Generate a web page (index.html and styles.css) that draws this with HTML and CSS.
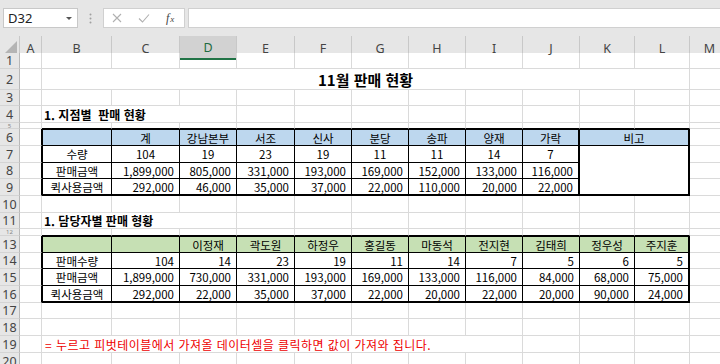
FILE: index.html
```html
<!DOCTYPE html>
<html lang="ko">
<head>
<meta charset="utf-8">
<title>11월 판매 현황</title>
<link rel="stylesheet" href="styles.css">
</head>
<body>
<div class="topbar">
  <div class="namebox"><span>D32</span><span class="caret"></span></div>
  <div class="dots"><svg width="3" height="11" viewBox="0 0 3 11"><circle cx="1.5" cy="1.5" r="1" fill="#a0a0a0"/><circle cx="1.5" cy="5.5" r="1" fill="#a0a0a0"/><circle cx="1.5" cy="9.5" r="1" fill="#a0a0a0"/></svg></div>
  <div class="fbtns">
    <svg width="10" height="10" viewBox="0 0 10 10"><path d="M1 1L9 9M9 1L1 9" stroke="#b0b0b0" stroke-width="1.1" fill="none"/></svg>
    <svg width="12" height="10" viewBox="0 0 12 10"><path d="M1 5.5L4.5 9L11 1.5" stroke="#b0b0b0" stroke-width="1.1" fill="none"/></svg>
    <span class="fx"><i>f</i><span class="x">x</span></span>
  </div>
  <div class="finput"></div>
</div>
<div class="sheet">
  <div class="r hdr">
    <div class="corner"><svg width="20" height="17" viewBox="0 0 20 17"><polygon points="17,3 17,15 5,15" fill="#b4b4b4"/></svg></div>
    <div class="ch">A</div><div class="ch">B</div><div class="ch">C</div><div class="ch sel">D</div><div class="ch">E</div><div class="ch">F</div><div class="ch">G</div><div class="ch">H</div><div class="ch">I</div><div class="ch">J</div><div class="ch">K</div><div class="ch">L</div><div class="ch">M</div>
  </div>
  <div class="r h16"><div class="rh">1</div><div class="c"></div><div class="c"></div><div class="c"></div><div class="c"></div><div class="c"></div><div class="c"></div><div class="c"></div><div class="c"></div><div class="c"></div><div class="c"></div><div class="c"></div><div class="c"></div><div class="c"></div></div>
  <div class="r h21"><div class="rh">2</div><div class="c"></div><div class="c s11 title">11월 판매 현황</div><div class="c"></div></div>
  <div class="r h16"><div class="rh">3</div><div class="c"></div><div class="c"></div><div class="c"></div><div class="c"></div><div class="c"></div><div class="c"></div><div class="c"></div><div class="c"></div><div class="c"></div><div class="c"></div><div class="c"></div><div class="c"></div><div class="c"></div></div>
  <div class="r h17"><div class="rh">4</div><div class="c"></div><div class="c s3 sec">1. 지점별&nbsp; 판매 현황</div><div class="c"></div><div class="c"></div><div class="c"></div><div class="c"></div><div class="c"></div><div class="c"></div><div class="c"></div><div class="c"></div><div class="c"></div></div>
  <div class="r h6"><div class="rh small">5</div><div class="c"></div><div class="c bt"></div><div class="c bt"></div><div class="c bt"></div><div class="c bt"></div><div class="c bt"></div><div class="c bt"></div><div class="c bt"></div><div class="c bt"></div><div class="c bt"></div><div class="c bt"></div><div class="c bt"></div><div class="c"></div></div>
  <div class="r h17"><div class="rh">6</div><div class="c ae"></div>
    <div class="c t tt bl blue"></div><div class="c t tt blue ctr">계</div><div class="c t tt blue ctr">강남본부</div><div class="c t tt blue ctr">서조</div><div class="c t tt blue ctr">신사</div><div class="c t tt blue ctr">분당</div><div class="c t tt blue ctr">송파</div><div class="c t tt blue ctr">양재</div><div class="c t tt blue ctr br">가락</div><div class="c t tt blue ctr s2 br">비고</div><div class="c"></div></div>
  <div class="r h17"><div class="rh">7</div><div class="c ae"></div>
    <div class="c t bl ctr">수량</div><div class="c t ctr">104</div><div class="c t ctr">19</div><div class="c t ctr">23</div><div class="c t ctr">19</div><div class="c t ctr">11</div><div class="c t ctr">11</div><div class="c t ctr">14</div><div class="c t ctr br">7</div><div class="c t s2 br nb"></div><div class="c"></div></div>
  <div class="r h16"><div class="rh">8</div><div class="c ae"></div>
    <div class="c t bl ctr">판매금액</div><div class="c t rt">1,899,000</div><div class="c t rt">805,000</div><div class="c t rt">331,000</div><div class="c t rt">193,000</div><div class="c t rt">169,000</div><div class="c t rt">152,000</div><div class="c t rt">133,000</div><div class="c t rt br">116,000</div><div class="c t s2 br nb"></div><div class="c"></div></div>
  <div class="r h17"><div class="rh">9</div><div class="c ae"></div>
    <div class="c t bl ctr bb">퀵사용금액</div><div class="c t rt bb">292,000</div><div class="c t rt bb">46,000</div><div class="c t rt bb">35,000</div><div class="c t rt bb">37,000</div><div class="c t rt bb">22,000</div><div class="c t rt bb">110,000</div><div class="c t rt bb">20,000</div><div class="c t rt br bb">22,000</div><div class="c t s2 br bb"></div><div class="c"></div></div>
  <div class="r h17"><div class="rh">10</div><div class="c"></div><div class="c"></div><div class="c"></div><div class="c"></div><div class="c"></div><div class="c"></div><div class="c"></div><div class="c"></div><div class="c"></div><div class="c"></div><div class="c"></div><div class="c"></div><div class="c"></div></div>
  <div class="r h16"><div class="rh">11</div><div class="c"></div><div class="c s3 sec">1. 담당자별 판매 형황</div><div class="c"></div><div class="c"></div><div class="c"></div><div class="c"></div><div class="c"></div><div class="c"></div><div class="c"></div><div class="c"></div><div class="c"></div></div>
  <div class="r h7"><div class="rh small">12</div><div class="c"></div><div class="c bt"></div><div class="c bt"></div><div class="c bt"></div><div class="c bt"></div><div class="c bt"></div><div class="c bt"></div><div class="c bt"></div><div class="c bt"></div><div class="c bt"></div><div class="c bt"></div><div class="c bt"></div><div class="c"></div></div>
  <div class="r h17"><div class="rh">13</div><div class="c ae"></div>
    <div class="c t tt bl green"></div><div class="c t tt green"></div><div class="c t tt green ctr">이정재</div><div class="c t tt green ctr">곽도원</div><div class="c t tt green ctr">하정우</div><div class="c t tt green ctr">홍길동</div><div class="c t tt green ctr">마동석</div><div class="c t tt green ctr">전지현</div><div class="c t tt green ctr">김태희</div><div class="c t tt green ctr">정우성</div><div class="c t tt green ctr br">주지훈</div><div class="c"></div></div>
  <div class="r h16"><div class="rh">14</div><div class="c ae"></div>
    <div class="c t bl ctr">판매수량</div><div class="c t rt">104</div><div class="c t rt">14</div><div class="c t rt">23</div><div class="c t rt">19</div><div class="c t rt">11</div><div class="c t rt">14</div><div class="c t rt">7</div><div class="c t rt">5</div><div class="c t rt">6</div><div class="c t rt br">5</div><div class="c"></div></div>
  <div class="r h17"><div class="rh">15</div><div class="c ae"></div>
    <div class="c t bl ctr">판매금액</div><div class="c t rt">1,899,000</div><div class="c t rt">730,000</div><div class="c t rt">331,000</div><div class="c t rt">193,000</div><div class="c t rt">169,000</div><div class="c t rt">133,000</div><div class="c t rt">116,000</div><div class="c t rt">84,000</div><div class="c t rt">68,000</div><div class="c t rt br">75,000</div><div class="c"></div></div>
  <div class="r h17"><div class="rh">16</div><div class="c ae"></div>
    <div class="c t bl ctr bb">퀵사용금액</div><div class="c t rt bb">292,000</div><div class="c t rt bb">22,000</div><div class="c t rt bb">35,000</div><div class="c t rt bb">37,000</div><div class="c t rt bb">22,000</div><div class="c t rt bb">20,000</div><div class="c t rt bb">22,000</div><div class="c t rt bb">20,000</div><div class="c t rt bb">90,000</div><div class="c t rt br bb">24,000</div><div class="c"></div></div>
  <div class="r h16"><div class="rh">17</div><div class="c"></div><div class="c"></div><div class="c"></div><div class="c"></div><div class="c"></div><div class="c"></div><div class="c"></div><div class="c"></div><div class="c"></div><div class="c"></div><div class="c"></div><div class="c"></div><div class="c"></div></div>
  <div class="r h17"><div class="rh">18</div><div class="c"></div><div class="c"></div><div class="c"></div><div class="c"></div><div class="c"></div><div class="c"></div><div class="c"></div><div class="c"></div><div class="c"></div><div class="c"></div><div class="c"></div><div class="c"></div><div class="c"></div></div>
  <div class="r h17"><div class="rh">19</div><div class="c"></div><div class="c s8 red">= 누르고 피벗테이블에서 가져올 데이터셀을 클릭하면 값이 가져와 집니다.</div><div class="c"></div><div class="c"></div><div class="c"></div><div class="c"></div></div>
  <div class="r h17"><div class="rh">20</div><div class="c"></div><div class="c"></div><div class="c"></div><div class="c"></div><div class="c"></div><div class="c"></div><div class="c"></div><div class="c"></div><div class="c"></div><div class="c"></div><div class="c"></div><div class="c"></div><div class="c"></div></div>
</div>
</body>
</html>
```

FILE: styles.css
```css
* { box-sizing: border-box; margin: 0; padding: 0; }
html, body { width: 720px; height: 364px; overflow: hidden; background: #fff; }
body { font-family: "Noto Sans CJK KR", "Noto Sans", sans-serif; color: #000; }

.topbar { height: 36px; background: #e6e6e6; display: flex; align-items: flex-start; padding: 8px 0 0 3px; }
.namebox { width: 75px; height: 20px; background: #fff; border: 1px solid #c8c8c8; display: flex; align-items: center; justify-content: space-between; padding: 0 5px 0 4px; font: 13px "Noto Sans", sans-serif; color: #222; }
.caret { width: 0; height: 0; border-left: 3px solid transparent; border-right: 3px solid transparent; border-top: 3px solid #555; }
.dots { width: 25px; height: 20px; display: flex; align-items: center; justify-content: center; }
.fbtns { width: 82px; height: 20px; background: #fff; border: 1px solid #d0d0d0; display: flex; align-items: center; padding-left: 8px; gap: 16px; }
.fx { font: italic 12px "Liberation Serif", serif; color: #444; display: flex; align-items: baseline; }
.fx .x { font-size: 9px; font-style: italic; margin-left: 1px; }
.finput { flex: 1; height: 20px; margin-left: 3px; background: #fff; border: 1px solid #d0d0d0; border-right: none; }

.sheet { width: 730px; }
.r { display: grid; grid-template-columns: 20px 22px 70px 68px 57px 58px 57px 57px 57px 57px 57px 55px 55px 40px; }
.hdr { height: 17px; background: #e6e6e6; }
.h6 { height: 6px; }
.h7 { height: 7px; }
.h16 { height: 16px; }
.h17 { height: 17px; }
.h21 { height: 21px; }

.corner { border-right: 1px solid #c8c8c8; }
.ch { display: flex; align-items: center; justify-content: center; font: 12.5px "Noto Sans", sans-serif; color: #444; border-right: 1px solid #c8c8c8; }
.ch.sel { background: #d2d2d2; color: #1e6b41; border-bottom: 2px solid #217346; }

.rh { background: #e6e6e6; display: flex; align-items: center; justify-content: center; font: 12.5px "Noto Sans", sans-serif; color: #444; border-right: 1px solid #b8b8b8; border-bottom: 1px solid #d4d4d4; overflow: hidden; }
.rh.small { font-size: 6px; color: #888; }

.c { display: flex; align-items: center; overflow: hidden; white-space: nowrap; font-size: 11.5px; border-right: 1px solid #dadada; border-bottom: 1px solid #dadada; padding: 0 2px; }
.s2 { grid-column: span 2; }
.s3 { grid-column: span 3; }
.s8 { grid-column: span 8; }
.s11 { grid-column: span 11; }

.title { justify-content: center; font-weight: 700; font-size: 15px; }
.sec { font-weight: 700; font-size: 12px; }
.red { color: #ee0000; font-size: 12px; letter-spacing: 0.45px; padding-left: 3px; }

.bt { border-bottom-color: #000; }
.ae { border-right-color: #000; }
.t { border-right: 1px solid #000; border-bottom: 1px solid #000; }
.tt { border-top: 1px solid #000; }
.bl { border-left: 1px solid #000; }
.br { border-right: 2px solid #000; }
.bb { border-bottom: 2px solid #000; }
.nb { border-bottom: 0; }
.blue { background: #bdd7ee; }
.green { background: #c6e0b4; }
.ctr { justify-content: center; }
.rt { justify-content: flex-end; padding-right: 5px; }
```
